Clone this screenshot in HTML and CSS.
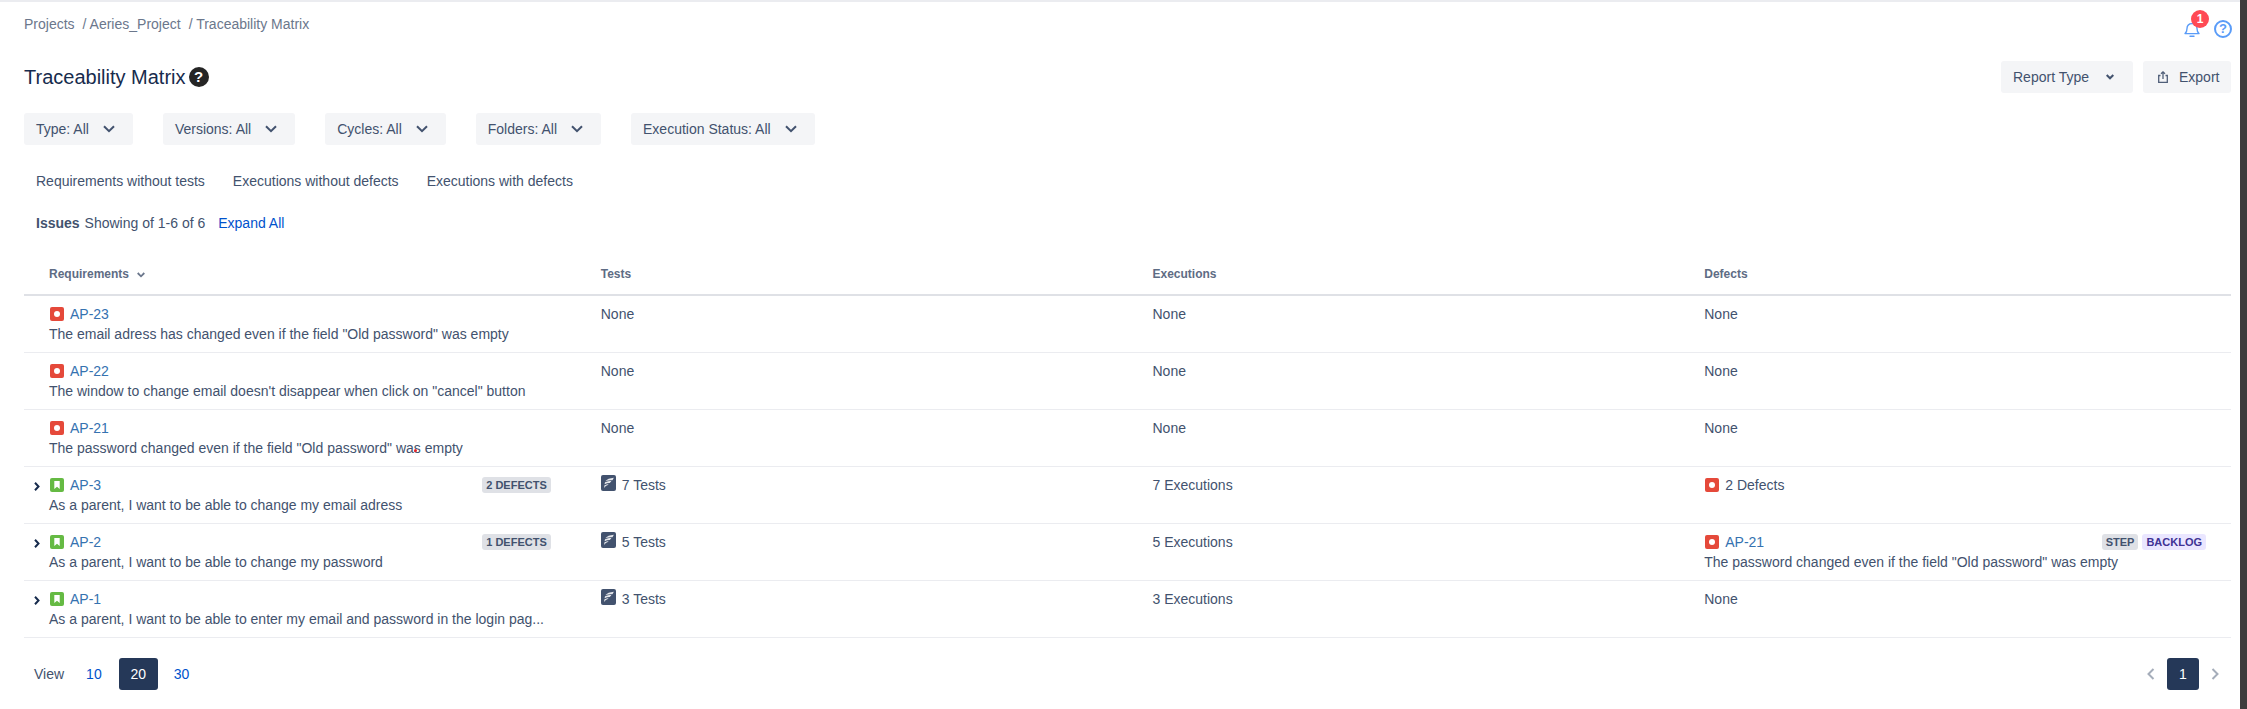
FILE: index.html
```html
<!DOCTYPE html>
<html lang="en">
<head>
    <meta charset="UTF-8">
    <meta name="viewport" content="width=device-width, initial-scale=1.0">
    <title>Traceability Matrix</title>
    <link rel="stylesheet" href="styles.css">
</head>
<body>
    <div class="page">
        <main class="content">
            <div class="topbar">
                <nav class="breadcrumb">
                    <a href="#">Projects</a>
                    <a href="#">/ Aeries_Project</a>
                    <a href="#">/ Traceability Matrix</a>
                </nav>
                <div class="top-icons">
                    <span class="bell">
                        <svg width="16" height="16" viewBox="0 0 16 16" fill="none" stroke="#5a9cf8" stroke-width="1.4"><path d="M1 12.6c1.6-1.2 2-2.6 2-5 0-3 2-5 5-5s5 2 5 5c0 2.4.4 3.800 2 5z" stroke-linejoin="round"/><path d="M6 15.200h4" stroke-linecap="round"/></svg>
                        <span class="bell-count">1</span>
                    </span>
                    <span class="help-outline">?</span>
                </div>
            </div>

            <div class="title-row">
                <h1>Traceability Matrix <span class="help-solid">?</span></h1>
                <div class="actions">
                    <button class="btn report-btn">Report Type
                        <svg class="chev" width="8" height="6" viewBox="0 0 8 6" fill="none" stroke="#42526e" stroke-width="2"><path d="M.7 1l3.300 3.300L7.300 1"/></svg>
                    </button>
                    <button class="btn export-btn">
                        <svg width="10" height="12" viewBox="0 0 10 12" fill="none" stroke="#505f79" stroke-width="1.300"><path d="M2.500 4.500H.7v6.800h8.600V4.500H7.500"/><path d="M5 8V1M3 2.800L5 .9l2 1.900"/></svg>
                        Export
                    </button>
                </div>
            </div>

            <div class="filters">
                <button class="filter">Type: All <svg width="12" height="8" viewBox="0 0 12 8" fill="none" stroke="#42526e" stroke-width="2"><path d="M1 1.200l5 5 5-5"/></svg></button>
                <button class="filter">Versions: All <svg width="12" height="8" viewBox="0 0 12 8" fill="none" stroke="#42526e" stroke-width="2"><path d="M1 1.200l5 5 5-5"/></svg></button>
                <button class="filter">Cycles: All <svg width="12" height="8" viewBox="0 0 12 8" fill="none" stroke="#42526e" stroke-width="2"><path d="M1 1.200l5 5 5-5"/></svg></button>
                <button class="filter">Folders: All <svg width="12" height="8" viewBox="0 0 12 8" fill="none" stroke="#42526e" stroke-width="2"><path d="M1 1.200l5 5 5-5"/></svg></button>
                <button class="filter">Execution Status: All <svg width="12" height="8" viewBox="0 0 12 8" fill="none" stroke="#42526e" stroke-width="2"><path d="M1 1.200l5 5 5-5"/></svg></button>
            </div>

            <div class="quick-links">
                <a href="#">Requirements without tests</a>
                <a href="#">Executions without defects</a>
                <a href="#">Executions with defects</a>
            </div>

            <div class="summary">
                <strong>Issues</strong>
                <span>Showing of 1-6 of 6</span>
                <a href="#">Expand All</a>
            </div>

            <table class="matrix">
                <thead>
                    <tr>
                        <th>Requirements <svg class="sort" width="8" height="6" viewBox="0 0 8 6" fill="none" stroke="#6b778c" stroke-width="1.800"><path d="M.7 1l3.300 3.300L7.300 1"/></svg></th>
                        <th>Tests</th>
                        <th>Executions</th>
                        <th>Defects</th>
                    </tr>
                </thead>
                <tbody>
                    <tr>
                        <td>
                            <div class="issue"><svg class="type-icon" viewBox="0 0 14 14"><rect width="14" height="14" rx="2" fill="#e5493a"/><circle cx="7" cy="7" r="3" fill="#fff"/></svg><a href="#">AP-23</a></div>
                            <div class="summary-text">The email adress has changed even if the field "Old password" was empty</div>
                        </td>
                        <td>None</td>
                        <td>None</td>
                        <td>None</td>
                    </tr>
                    <tr>
                        <td>
                            <div class="issue"><svg class="type-icon" viewBox="0 0 14 14"><rect width="14" height="14" rx="2" fill="#e5493a"/><circle cx="7" cy="7" r="3" fill="#fff"/></svg><a href="#">AP-22</a></div>
                            <div class="summary-text">The window to change email doesn't disappear when click on "cancel" button</div>
                        </td>
                        <td>None</td>
                        <td>None</td>
                        <td>None</td>
                    </tr>
                    <tr>
                        <td>
                            <div class="issue"><svg class="type-icon" viewBox="0 0 14 14"><rect width="14" height="14" rx="2" fill="#e5493a"/><circle cx="7" cy="7" r="3" fill="#fff"/></svg><a href="#">AP-21</a></div>
                            <div class="summary-text has-mark">The password changed even if the field "Old password" was empty<span class="mark"></span></div>
                        </td>
                        <td>None</td>
                        <td>None</td>
                        <td>None</td>
                    </tr>
                    <tr>
                        <td class="expandable">
                            <svg class="expander" width="6" height="9" viewBox="0 0 6 9" fill="none" stroke="#172b4d" stroke-width="2"><path d="M1 .8l3.500 3.700L1 8.200"/></svg>
                            <div class="issue"><svg class="type-icon" viewBox="0 0 14 14"><rect width="14" height="14" rx="2" fill="#65ba43"/><path d="M4.300 3h5.400v8L7 8.800 4.300 11z" fill="#fff"/></svg><a href="#">AP-3</a><span class="tag">2 Defects</span></div>
                            <div class="summary-text">As a parent, I want to be able to change my email adress</div>
                        </td>
                        <td>
                            <div class="issue"><svg class="test-icon" viewBox="0 0 15 16"><rect width="15" height="16" rx="2" fill="#42526e"/><path d="M4.200 6.300C6 4.300 8.800 3.100 12.800 2.800c-.3 1-.8 1.800-1.400 2.400-2.700 0-5 .3-7.200 1.100zM3.600 9.200c.1-.8.300-1.400.5-1.900 2-.8 4-1.100 6.300-1.200-.4.800-1 1.400-1.700 1.900-1.900 0-3.500.4-5.100 1.200zM3.200 13c0-1 .1-1.900.3-2.800 1.400-.7 2.800-1.100 4.200-1.300-.7 1-1.700 1.700-2.900 2.100-.6.600-1.100 1.300-1.600 2z" fill="#e6e8ec"/></svg>7 Tests</div>
                        </td>
                        <td>7 Executions</td>
                        <td>
                            <div class="issue"><svg class="type-icon" viewBox="0 0 14 14"><rect width="14" height="14" rx="2" fill="#e5493a"/><circle cx="7" cy="7" r="3" fill="#fff"/></svg>2 Defects</div>
                        </td>
                    </tr>
                    <tr>
                        <td class="expandable">
                            <svg class="expander" width="6" height="9" viewBox="0 0 6 9" fill="none" stroke="#172b4d" stroke-width="2"><path d="M1 .8l3.500 3.700L1 8.200"/></svg>
                            <div class="issue"><svg class="type-icon" viewBox="0 0 14 14"><rect width="14" height="14" rx="2" fill="#65ba43"/><path d="M4.300 3h5.400v8L7 8.800 4.300 11z" fill="#fff"/></svg><a href="#">AP-2</a><span class="tag">1 Defects</span></div>
                            <div class="summary-text">As a parent, I want to be able to change my password</div>
                        </td>
                        <td>
                            <div class="issue"><svg class="test-icon" viewBox="0 0 15 16"><rect width="15" height="16" rx="2" fill="#42526e"/><path d="M4.200 6.300C6 4.300 8.800 3.100 12.800 2.800c-.3 1-.8 1.800-1.400 2.400-2.700 0-5 .3-7.200 1.100zM3.600 9.200c.1-.8.300-1.400.5-1.900 2-.8 4-1.100 6.300-1.200-.4.800-1 1.400-1.700 1.900-1.900 0-3.500.4-5.100 1.200zM3.200 13c0-1 .1-1.900.3-2.800 1.400-.7 2.800-1.100 4.200-1.300-.7 1-1.700 1.700-2.900 2.100-.6.600-1.100 1.300-1.600 2z" fill="#e6e8ec"/></svg>5 Tests</div>
                        </td>
                        <td>5 Executions</td>
                        <td>
                            <div class="issue"><svg class="type-icon" viewBox="0 0 14 14"><rect width="14" height="14" rx="2" fill="#e5493a"/><circle cx="7" cy="7" r="3" fill="#fff"/></svg><a href="#">AP-21</a><span class="tag">Step</span><span class="tag tag-purple">Backlog</span></div>
                            <div class="summary-text">The password changed even if the field "Old password" was empty</div>
                        </td>
                    </tr>
                    <tr>
                        <td class="expandable">
                            <svg class="expander" width="6" height="9" viewBox="0 0 6 9" fill="none" stroke="#172b4d" stroke-width="2"><path d="M1 .8l3.500 3.700L1 8.200"/></svg>
                            <div class="issue"><svg class="type-icon" viewBox="0 0 14 14"><rect width="14" height="14" rx="2" fill="#65ba43"/><path d="M4.300 3h5.400v8L7 8.800 4.300 11z" fill="#fff"/></svg><a href="#">AP-1</a></div>
                            <div class="summary-text">As a parent, I want to be able to enter my email and password in the login pag...</div>
                        </td>
                        <td>
                            <div class="issue"><svg class="test-icon" viewBox="0 0 15 16"><rect width="15" height="16" rx="2" fill="#42526e"/><path d="M4.200 6.300C6 4.300 8.800 3.100 12.800 2.800c-.3 1-.8 1.800-1.400 2.400-2.700 0-5 .3-7.200 1.100zM3.600 9.200c.1-.8.300-1.400.5-1.900 2-.8 4-1.100 6.300-1.200-.4.800-1 1.400-1.700 1.900-1.900 0-3.500.4-5.100 1.200zM3.200 13c0-1 .1-1.900.3-2.800 1.400-.7 2.800-1.100 4.200-1.300-.7 1-1.700 1.700-2.900 2.100-.6.600-1.100 1.300-1.600 2z" fill="#e6e8ec"/></svg>3 Tests</div>
                        </td>
                        <td>3 Executions</td>
                        <td>None</td>
                    </tr>
                </tbody>
            </table>

            <div class="pager-row">
                <div class="view-size">
                    <span class="view-label">View</span>
                    <a href="#">10</a>
                    <a href="#" class="current">20</a>
                    <a href="#">30</a>
                </div>
                <div class="pager">
                    <svg width="8" height="12" viewBox="0 0 8 12" fill="none" stroke="#a5adba" stroke-width="2"><path d="M6.500 1l-5 5 5 5"/></svg>
                    <a href="#" class="page-current">1</a>
                    <svg width="8" height="12" viewBox="0 0 8 12" fill="none" stroke="#a5adba" stroke-width="2"><path d="M1.500 1l5 5-5 5"/></svg>
                </div>
            </div>
        </main>
        <div class="scrollbar"></div>
    </div>
</body>
</html>
```
FILE: styles.css
```css
* {
    margin: 0;
    padding: 0;
    box-sizing: border-box;
}

html, body {
    height: 100%;
    overflow: hidden;
}

body {
    font-family: 'Liberation Sans', Arial, sans-serif;
    font-size: 14px;
    line-height: 20px;
    color: #42526e;
    background: white;
}

a {
    text-decoration: none;
}

.page {
    display: flex;
    height: 100%;
}

.content {
    flex: 1;
    min-width: 0;
    padding: 0 9px 0 24px;
    border-top: 2px solid #ebecf0;
}

.scrollbar {
    width: 7px;
    background: #3d3d3d;
}

/* top line */
.topbar {
    display: flex;
    justify-content: space-between;
    height: 59px;
    padding-top: 12px;
}

.breadcrumb {
    display: flex;
    gap: 8px;
}

.breadcrumb a {
    color: #6b778c;
}

.top-icons {
    display: flex;
    gap: 14px;
    padding-top: 6px;
    margin-right: -1px;
}

.bell {
    position: relative;
    width: 16px;
    height: 16px;
    margin-top: 1px;
}

.bell svg {
    display: block;
}

.bell-count {
    position: absolute;
    top: -11px;
    left: 7px;
    width: 18px;
    height: 18px;
    border-radius: 50%;
    background: #ff4a55;
    color: white;
    font-size: 12px;
    font-weight: 700;
    line-height: 18px;
    text-align: center;
}

.help-outline {
    width: 18px;
    height: 18px;
    border: 2px solid #5a9cf8;
    border-radius: 50%;
    color: #5a9cf8;
    font-size: 13px;
    font-weight: 700;
    line-height: 14px;
    text-align: center;
}

/* title */
.title-row {
    display: flex;
    justify-content: space-between;
    align-items: center;
    height: 32px;
}

h1 {
    display: flex;
    align-items: center;
    gap: 3px;
    font-size: 20px;
    font-weight: 400;
    color: #172b4d;
}

.help-solid {
    width: 20px;
    height: 20px;
    border-radius: 50%;
    background: #252525;
    color: white;
    font-size: 15px;
    font-weight: 700;
    line-height: 20px;
    text-align: center;
}

.actions {
    display: flex;
    gap: 10px;
}

.btn, .filter {
    display: flex;
    align-items: center;
    height: 32px;
    border: none;
    border-radius: 3px;
    background: #f4f5f7;
    color: #42526e;
    font: inherit;
}

.report-btn {
    width: 132px;
    padding-left: 12px;
    gap: 17px;
}

.export-btn {
    width: 88px;
    padding-left: 15px;
    gap: 11px;
}

/* filters */
.filters {
    display: flex;
    gap: 30px;
    margin-top: 20px;
}

.filter {
    padding: 0 18px 0 12px;
    gap: 14px;
}

.quick-links {
    display: flex;
    gap: 28px;
    margin-top: 26px;
    padding-left: 12px;
}

.quick-links a {
    color: #42526e;
}

.summary {
    display: flex;
    gap: 5px;
    margin-top: 22px;
    padding-left: 12px;
}

.summary strong {
    font-weight: 700;
}

.summary a {
    margin-left: 8px;
    color: #0052cc;
}

/* table */
.matrix {
    width: 100%;
    margin-top: 20px;
    border-collapse: collapse;
    table-layout: fixed;
}

.matrix th {
    height: 42px;
    padding: 0 25px;
    border-bottom: 2px solid #dfe1e6;
    color: #5e6c84;
    font-size: 12px;
    font-weight: 700;
    text-align: left;
}

.sort {
    margin-left: 5px;
}

.matrix td {
    position: relative;
    height: 57px;
    padding: 8px 25px 0;
    border-bottom: 1px solid #ebecf0;
    vertical-align: top;
}

.issue {
    display: flex;
    align-items: center;
    gap: 6px;
    height: 20px;
}

.issue a {
    color: #3572b0;
}

.type-icon {
    flex: none;
    width: 14px;
    height: 14px;
    margin-left: 1px;
}

.test-icon {
    flex: none;
    width: 15px;
    height: 16px;
    margin-top: -3px;
}

.tag {
    height: 16px;
    padding: 0 4px;
    border-radius: 3px;
    background: #dfe1e6;
    color: #42526e;
    font-size: 11px;
    font-weight: 700;
    line-height: 16px;
    text-transform: uppercase;
}

.issue a + .tag {
    margin-left: auto;
}

.tag + .tag {
    margin-left: -2px;
}

.tag-purple {
    background: #eae6ff;
    color: #403294;
}

.summary-text {
    position: relative;
    white-space: nowrap;
}

.expander {
    position: absolute;
    top: 15px;
    left: 10px;
}

.mark {
    position: absolute;
    top: 11px;
    left: 365px;
    width: 3px;
    height: 3px;
    border-radius: 50%;
    background: #e8202a;
}

/* footer */
.pager-row {
    display: flex;
    justify-content: space-between;
    margin-top: 20px;
}

.view-size {
    display: flex;
    align-items: center;
    padding-left: 10px;
}

.view-label {
    margin-right: 22px;
}

.view-size a {
    color: #0052cc;
}

.view-size .current {
    width: 39px;
    height: 32px;
    margin: 0 16px 0 17px;
    border-radius: 3px;
    background: #253858;
    color: white;
    line-height: 32px;
    text-align: center;
}

.pager {
    display: flex;
    align-items: center;
    gap: 12px;
    margin-right: 12px;
}

.page-current {
    width: 32px;
    height: 32px;
    border-radius: 3px;
    background: #253858;
    color: white;
    line-height: 32px;
    text-align: center;
}
```
